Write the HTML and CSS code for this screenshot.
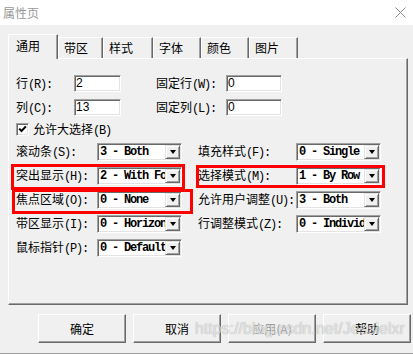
FILE: index.html
```html
<!DOCTYPE html>
<html lang="zh-CN">
<head>
    <meta charset="UTF-8">
    <meta name="viewport" content="width=device-width, initial-scale=1.0">
    <title>属性页</title>
    <link rel="stylesheet" href="styles.css">
</head>
<body>
    <div class="window">
        <div class="titlebar">
            <span class="title">属性页</span>
            <svg class="close" width="11" height="11" viewBox="0 0 11 11">
                <path d="M0.5 0.5 L10.5 10.5 M10.5 0.5 L0.5 10.5" stroke="#8a8a8a" stroke-width="1" fill="none"/>
            </svg>
        </div>

        <div class="content">
            <!-- Tab strip -->
            <div class="tabs">
                <div class="tab active">通用</div>
                <div class="tab">带区</div>
                <div class="tab">样式</div>
                <div class="tab">字体</div>
                <div class="tab">颜色</div>
                <div class="tab">图片</div>
            </div>

            <div class="panel">
                <div class="grid-top">
                    <span class="label">行<span class="m">(R):</span></span>
                    <div class="field">2</div>
                    <span class="label col-r">固定行<span class="m">(W):</span></span>
                    <div class="field">0</div>

                    <span class="label">列<span class="m">(C):</span></span>
                    <div class="field">13</div>
                    <span class="label col-r">固定列<span class="m">(L):</span></span>
                    <div class="field">0</div>
                </div>

                <div class="check-row">
                    <span class="checkbox">
                        <svg width="9" height="9" viewBox="0 0 9 9">
                            <path d="M1.2 3.6 L3.5 6 L7.9 1.4" stroke="#000" stroke-width="2" fill="none"/>
                        </svg>
                    </span>
                    <span class="label">允许大选择<span class="m">(B)</span></span>
                </div>

                <div class="grid-combo">
                    <span class="label">滚动条<span class="m">(S):</span></span>
                    <div class="combo"><span class="val">3 - Both</span><span class="drop"></span></div>
                    <span class="label col-r">填充样式<span class="m">(F):</span></span>
                    <div class="combo"><span class="val">0 - Single</span><span class="drop"></span></div>

                    <span class="label">突出显示<span class="m">(H):</span></span>
                    <div class="combo"><span class="val">2 - With Focus</span><span class="drop"></span></div>
                    <span class="label col-r">选择模式<span class="m">(M):</span></span>
                    <div class="combo"><span class="val">1 - By Row</span><span class="drop"></span></div>

                    <span class="label">焦点区域<span class="m">(O):</span></span>
                    <div class="combo"><span class="val">0 - None</span><span class="drop"></span></div>
                    <span class="label col-r">允许用户调整<span class="m">(U):</span></span>
                    <div class="combo"><span class="val">3 - Both</span><span class="drop"></span></div>

                    <span class="label">带区显示<span class="m">(I):</span></span>
                    <div class="combo"><span class="val">0 - Horizontal</span><span class="drop"></span></div>
                    <span class="label col-r">行调整模式<span class="m">(Z):</span></span>
                    <div class="combo"><span class="val">0 - Individual</span><span class="drop"></span></div>

                    <span class="label">鼠标指针<span class="m">(P):</span></span>
                    <div class="combo"><span class="val">0 - Default</span><span class="drop"></span></div>
                </div>
            </div>

            <div class="buttons">
                <div class="btn">确定</div>
                <div class="btn">取消</div>
                <div class="btn disabled">应用(A)</div>
                <div class="btn">帮助</div>
            </div>
        </div>

        <!-- red highlight frames drawn over the dialog -->
        <div class="mark mark-h"></div>
        <div class="mark mark-o"></div>
        <div class="mark mark-m"></div>

        <div class="watermark">https://blog.csdn.net/Jessielxr</div>
    </div>
</body>
</html>
```

FILE: styles.css
```css
* {
    box-sizing: border-box;
}

body {
    margin: 0;
    background-color: #f0f0f0;
    font-family: "Noto Sans CJK SC", sans-serif;
    font-size: 12px;
    color: #000;
}

.window {
    position: relative;
    width: 413px;
    height: 354px;
    overflow: hidden;
    border-bottom: 1px solid #a0a0a0;
}

.titlebar {
    height: 25px;
    background-color: #fff;
    display: flex;
    align-items: center;
    justify-content: space-between;
    padding: 0 7px 0 3px;
}

.title {
    color: #999;
    line-height: 16px;
}

.content {
    padding: 9px 0 0 8px;
}

/* Tabs */
.tabs {
    position: relative;
    z-index: 1;
    display: flex;
    align-items: flex-end;
    height: 24px;
}

.tab {
    height: 21px;
    border: 1px solid;
    border-color: #fff #696969 transparent #fff;
    border-bottom: none;
    box-shadow: inset -1px 0 #a0a0a0;
    padding: 2px 0 0 5px;
    line-height: 16px;
    background-color: #f0f0f0;
}

.tab.active {
    height: 25px;
    margin-bottom: -1px;
    padding: 3px 0 0 7px;
}

.tab:nth-child(1) { width: 50px; }
.tab:nth-child(2) { width: 45px; }
.tab:nth-child(3) { width: 50px; }
.tab:nth-child(4) { width: 48px; }
.tab:nth-child(5) { width: 48px; }
.tab:nth-child(6) { width: 49px; }

.panel {
    width: 400px;
    height: 247px;
    border: 1px solid;
    border-color: #fff #696969 #696969 #fff;
    box-shadow: inset -1px -1px #a0a0a0;
    padding: 16px 0 0 7px;
}

.label {
    white-space: nowrap;
    line-height: 16px;
}

.m {
    font-family: "Liberation Mono", monospace;
    letter-spacing: -1.2px;
}

.col-r {
    grid-column: 4;
}

.grid-top {
    display: grid;
    grid-template-columns: 58px 47px 35px 70px 56px;
    grid-auto-rows: 17px;
    row-gap: 7px;
    align-items: center;
}

.field {
    height: 17px;
    background-color: #fff;
    border: 1px solid;
    border-color: #a0a0a0 #fff #fff #a0a0a0;
    box-shadow: inset 1px 1px #696969, inset -1px -1px #e3e3e3;
    padding-left: 1px;
    font-family: "Liberation Sans", sans-serif;
    font-size: 12px;
    line-height: 15px;
}

.check-row {
    display: flex;
    align-items: center;
    gap: 4px;
    height: 13px;
    margin-top: 7px;
}

.checkbox {
    width: 13px;
    height: 13px;
    background-color: #fff;
    border: 1px solid;
    border-color: #a0a0a0 #fff #fff #a0a0a0;
    box-shadow: inset 1px 1px #696969, inset -1px -1px #e3e3e3;
    display: flex;
    align-items: center;
    justify-content: center;
}

.grid-combo {
    display: grid;
    grid-template-columns: 81px 85px 16px 98px 85px;
    grid-auto-rows: 18px;
    row-gap: 6px;
    align-items: center;
    margin-top: 7px;
}

.combo {
    display: flex;
    height: 18px;
    background-color: #fff;
    border: 1px solid;
    border-color: #a0a0a0 #fff #fff #a0a0a0;
    box-shadow: inset 1px 1px #696969, inset -1px -1px #e3e3e3;
}

.val {
    flex: 1;
    overflow: hidden;
    white-space: nowrap;
    padding: 1px 0 0 2px;
    font-family: "Liberation Mono", monospace;
    font-size: 12px;
    font-weight: bold;
    letter-spacing: -1.2px;
    line-height: 15px;
}

.drop {
    width: 15px;
    margin: 1px 1px 1px 0;
    background-color: #f0f0f0;
    border: 1px solid;
    border-color: #e3e3e3 #696969 #696969 #e3e3e3;
    box-shadow: inset 1px 1px #fff, inset -1px -1px #a0a0a0;
    display: flex;
    align-items: center;
    justify-content: center;
}

.drop::after {
    content: "";
    border-top: 4px solid #000;
    border-left: 3.5px solid transparent;
    border-right: 3.5px solid transparent;
}

/* Bottom buttons */
.buttons {
    display: flex;
    gap: 7px;
    margin-top: 9px;
    padding-left: 30px;
}

.btn {
    width: 88px;
    height: 29px;
    border: 1px solid;
    border-color: #fff #696969 #696969 #fff;
    box-shadow: inset -1px -1px #a0a0a0;
    display: flex;
    align-items: center;
    justify-content: center;
    line-height: 16px;
}

.btn.disabled {
    color: #a0a0a0;
}

/* Red frames */
.mark {
    position: absolute;
    border: 3px solid #f00;
}

.mark-h {
    left: 11px;
    top: 164px;
    width: 174px;
    height: 26px;
}

.mark-o {
    left: 12px;
    top: 189px;
    width: 181px;
    height: 25px;
}

.mark-m {
    left: 196px;
    top: 165px;
    width: 189px;
    height: 23px;
}

.watermark {
    position: absolute;
    left: 195px;
    top: 321px;
    font-family: "Liberation Sans", sans-serif;
    font-size: 16px;
    line-height: 16px;
    white-space: nowrap;
    color: rgba(255, 255, 255, 0.7);
    text-shadow: 0 0 1px rgba(0, 0, 0, 0.4);
}
```
